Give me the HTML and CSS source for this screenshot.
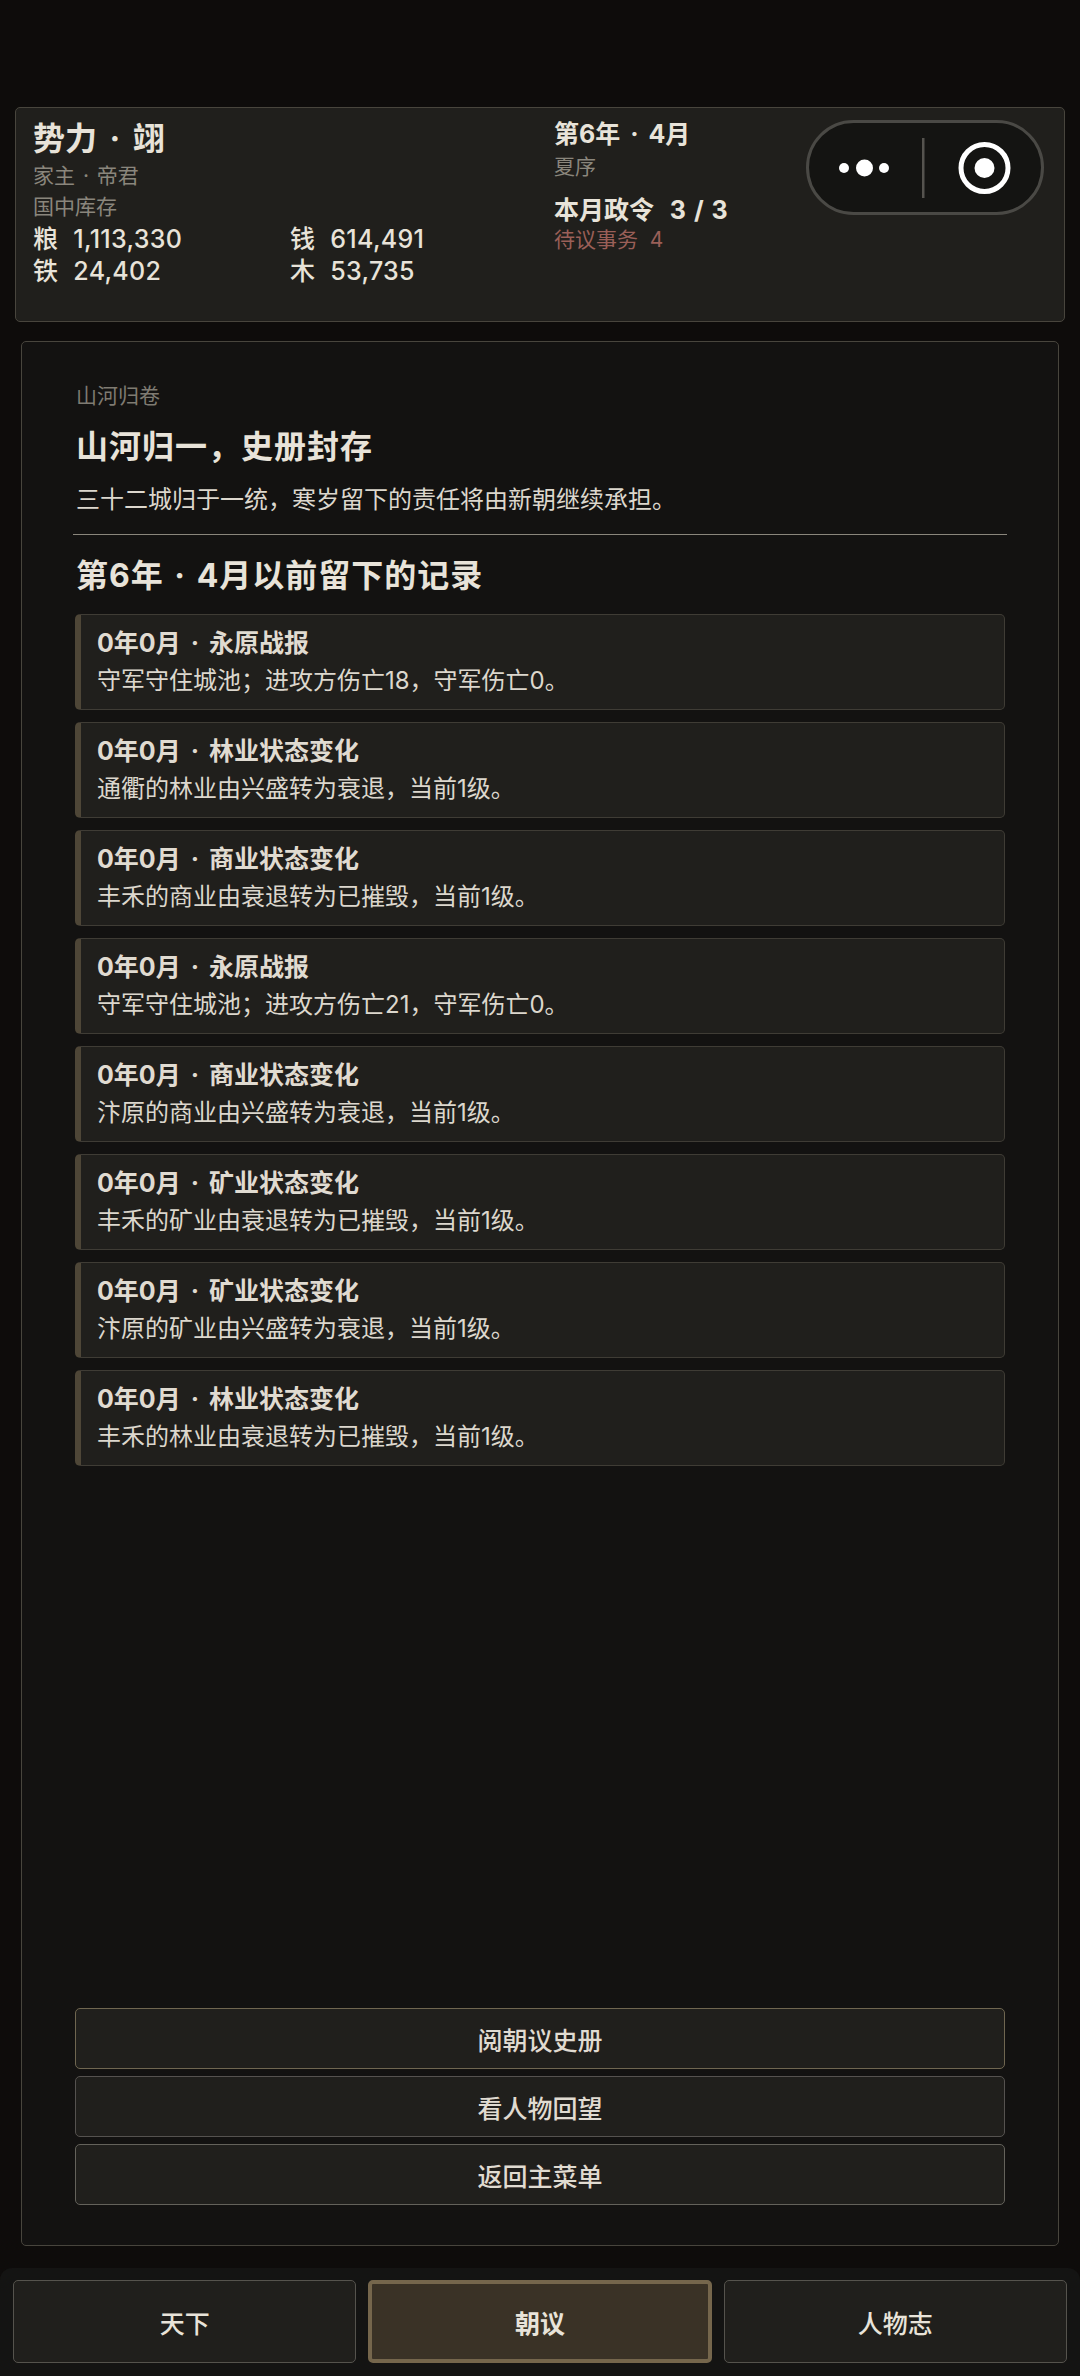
FILE: index.html
```html
<!DOCTYPE html>
<html>
<head>
    <title>势力</title>
    <link rel="stylesheet" href="styles.css">
</head>
<body>
    <header class="status">
        <div class="status-left">
            <div class="faction">势力 · 翊</div>
            <div class="muted">家主 · 帝君</div>
            <div class="muted">国中库存</div>
            <div class="stock">
                <div class="stock-item"><span>粮</span><span>1,113,330</span></div>
                <div class="stock-item"><span>钱</span><span>614,491</span></div>
                <div class="stock-item"><span>铁</span><span>24,402</span></div>
                <div class="stock-item"><span>木</span><span>53,735</span></div>
            </div>
        </div>
        <div class="status-right">
            <div class="date">第6年 · 4月</div>
            <div class="muted">夏序</div>
            <div class="orders">本月政令&nbsp; 3 / 3</div>
            <div class="pending">待议事务&nbsp; 4</div>
        </div>
        <div class="capsule">
            <svg width="238" height="95" viewBox="0 0 238 95">
                <circle cx="38" cy="48" r="5" fill="#fff"/>
                <circle cx="58.5" cy="48" r="8.5" fill="#fff"/>
                <circle cx="78" cy="48" r="5" fill="#fff"/>
                <rect x="116" y="18" width="2.5" height="60" fill="#55534e"/>
                <circle cx="178.5" cy="48" r="23.5" fill="none" stroke="#fff" stroke-width="5"/>
                <circle cx="178.5" cy="48" r="10" fill="#fff"/>
            </svg>
        </div>
    </header>

    <main class="panel">
        <div class="eyebrow">山河归卷</div>
        <h1>山河归一，史册封存</h1>
        <p class="lead">三十二城归于一统，寒岁留下的责任将由新朝继续承担。</p>
        <hr class="rule">
        <h2>第6年 · 4月以前留下的记录</h2>

        <div class="records">
            <div class="record">
                <div class="record-title">0年0月 · 永原战报</div>
                <div class="record-text">守军守住城池；进攻方伤亡18，守军伤亡0。</div>
            </div>
            <div class="record">
                <div class="record-title">0年0月 · 林业状态变化</div>
                <div class="record-text">通衢的林业由兴盛转为衰退，当前1级。</div>
            </div>
            <div class="record">
                <div class="record-title">0年0月 · 商业状态变化</div>
                <div class="record-text">丰禾的商业由衰退转为已摧毁，当前1级。</div>
            </div>
            <div class="record">
                <div class="record-title">0年0月 · 永原战报</div>
                <div class="record-text">守军守住城池；进攻方伤亡21，守军伤亡0。</div>
            </div>
            <div class="record">
                <div class="record-title">0年0月 · 商业状态变化</div>
                <div class="record-text">汴原的商业由兴盛转为衰退，当前1级。</div>
            </div>
            <div class="record">
                <div class="record-title">0年0月 · 矿业状态变化</div>
                <div class="record-text">丰禾的矿业由衰退转为已摧毁，当前1级。</div>
            </div>
            <div class="record">
                <div class="record-title">0年0月 · 矿业状态变化</div>
                <div class="record-text">汴原的矿业由兴盛转为衰退，当前1级。</div>
            </div>
            <div class="record">
                <div class="record-title">0年0月 · 林业状态变化</div>
                <div class="record-text">丰禾的林业由衰退转为已摧毁，当前1级。</div>
            </div>
        </div>

        <div class="actions">
            <button class="btn btn-first">阅朝议史册</button>
            <button class="btn btn-second">看人物回望</button>
            <button class="btn">返回主菜单</button>
        </div>
    </main>

    <nav class="tabs">
        <button class="tab">天下</button>
        <button class="tab tab-active">朝议</button>
        <button class="tab">人物志</button>
    </nav>
</body>
</html>
```

FILE: styles.css
```css
* { box-sizing: border-box; }
html, body { margin: 0; }
body {
    width: 1080px;
    height: 2376px;
    padding-top: 107px;
    background: #0e0c0b;
    color: #e8e3d9;
    font-family: Inter, "Noto Sans CJK SC", sans-serif;
    display: flex;
    flex-direction: column;
    overflow: hidden;
}
.status {
    position: relative;
    height: 215px;
    margin: 0 15px 0 15px;
    padding: 11px 17px 0;
    background: #201f1c;
    border: 1.5px solid #48453d;
    border-radius: 5px;
    display: grid;
    grid-template-columns: 521px 1fr;
}
.faction {
    font-size: 32px;
    line-height: 40px;
    font-weight: 700;
    word-spacing: 5px;
}
.muted {
    font-size: 21px;
    line-height: 28px;
    word-spacing: 2px;
    color: #8a867c;
    margin-top: 3px;
}
.stock {
    display: grid;
    grid-template-columns: 257px 1fr;
    margin-top: 1.5px;
}
.stock-item {
    display: flex;
    gap: 15px;
    font-size: 25px;
    line-height: 32px;
    font-weight: 500;
    letter-spacing: 0.3px;
}
.status-right { margin-top: -2px; }
.status-right .muted { margin-top: 1.5px; }
.date, .orders {
    font-size: 25px;
    line-height: 34px;
    font-weight: 700;
    word-spacing: 4px;
}
.orders {
    margin-top: 12.5px;
    word-spacing: 2px;
}
.pending {
    font-size: 21px;
    line-height: 28px;
    color: #9a5f58;
    margin-top: -1px;
}
/* wechat capsule sits over the header */
.capsule {
    position: absolute;
    top: 12px;
    right: 20px;
    width: 238px;
    height: 95px;
    background: #141412;
    border: 3px solid #4a4945;
    border-radius: 48px;
    overflow: hidden;
}
.capsule svg {
    display: block;
    margin: -3px;
}
.panel {
    height: 1905px;
    margin: 19px 21px 0;
    padding: 0 53px 40px;
    background: #131211;
    border: 1.5px solid #48453d;
    border-radius: 5px;
    display: flex;
    flex-direction: column;
}
.eyebrow {
    margin: 40px 0 0 1px;
    font-size: 21px;
    line-height: 28px;
    color: #7f7b72;
}
h1 {
    margin: 15px 0 0 1px;
    font-size: 32px;
    line-height: 44px;
    font-weight: 700;
    letter-spacing: 1px;
}
.lead {
    margin: 13.5px 0 0 1px;
    font-size: 24px;
    line-height: 34px;
    color: #dcd7cd;
}
.rule {
    height: 1.5px;
    margin: 17px -2px 0;
    border: none;
    background: #8a867c;
}
h2 {
    margin: 19.5px 0 0 1px;
    font-size: 32px;
    line-height: 42px;
    font-weight: 700;
    word-spacing: 2px;
    letter-spacing: 1px;
}
.records {
    display: flex;
    flex-direction: column;
    gap: 12px;
    margin-top: 17px;
}
.record {
    height: 96px;
    padding: 10px 16px 0;
    background: #201f1c;
    border: 1.5px solid #3f3c35;
    border-left: 6px solid #4e4637;
    border-radius: 5px;
}
.record-title {
    font-size: 25px;
    line-height: 36px;
    font-weight: 700;
    word-spacing: 4px;
    color: #e0dbd1;
}
.record-text {
    margin-top: 2px;
    font-size: 24px;
    line-height: 36px;
    color: #dcd7cd;
}
.actions {
    display: flex;
    flex-direction: column;
    gap: 7px;
    margin-top: auto;
}
.btn {
    height: 61px;
    padding: 0;
    background: #201f1c;
    border: 1.5px solid #64625b;
    border-radius: 5px;
    color: #e0dbd1;
    font-family: inherit;
    font-size: 25px;
    font-weight: 500;
}
.btn-first { border-color: #6f6650; }
.btn-second { border-color: #55524f; }
.tabs {
    flex: 1;
    margin-top: 22px;
    padding: 12px 13px 13px;
    background: #141413;
    border-radius: 12px 12px 0 0;
    display: grid;
    grid-template-columns: repeat(3, 1fr);
    gap: 12px;
}
.tab {
    background: #201f1c;
    border: 1.5px solid #55534d;
    border-radius: 5px;
    color: #e8e3d9;
    font-family: inherit;
    font-size: 25px;
    font-weight: 500;
}
.tab-active {
    background: #3a3226;
    border: 4px solid #75664c;
    font-weight: 700;
}
```
